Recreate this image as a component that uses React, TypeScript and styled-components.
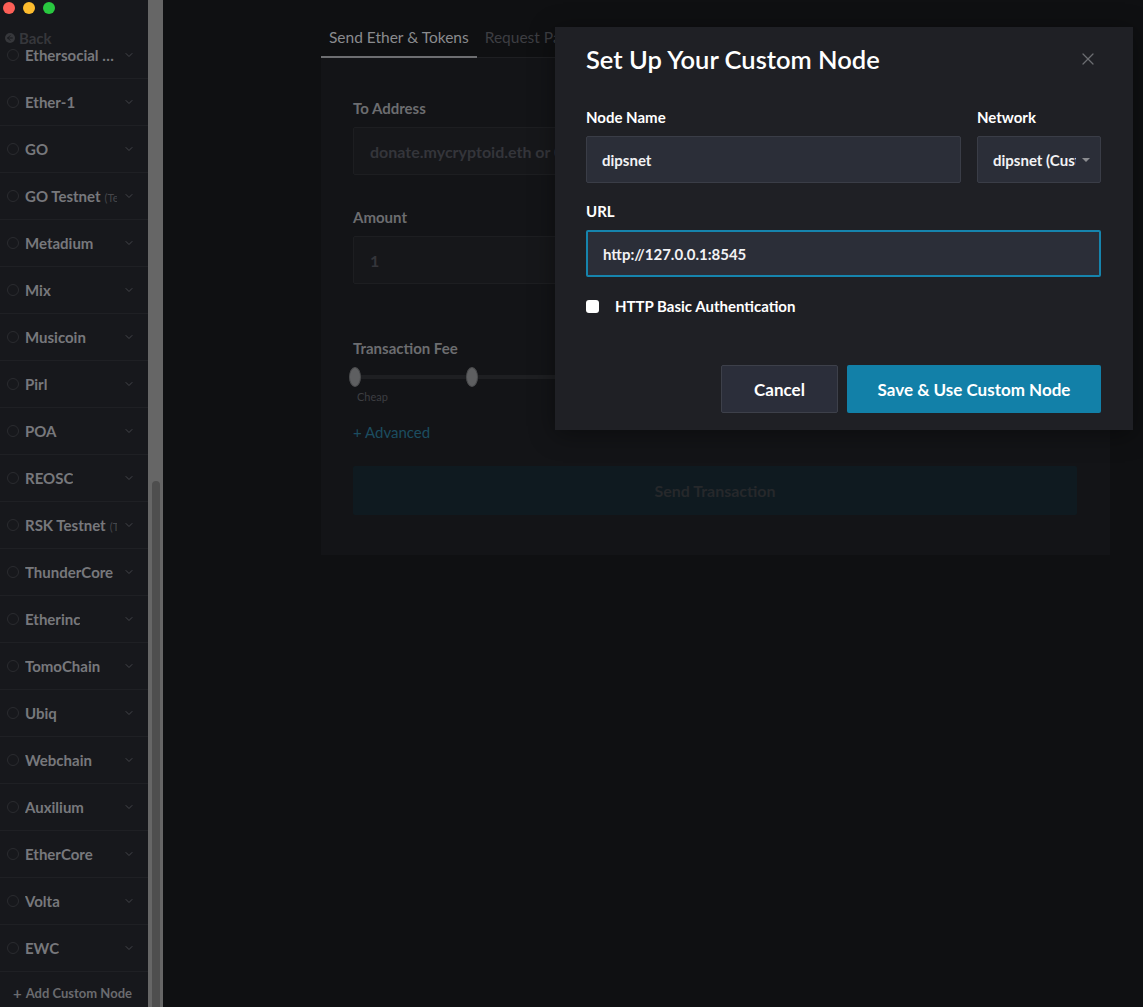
import React from 'react';
import styled, { createGlobalStyle } from 'styled-components';
import { ChevronDown, X, ArrowLeft } from 'lucide-react';

const GlobalStyle = createGlobalStyle`
  html, body {
    margin: 0;
    padding: 0;
    background: #0f1012;
  }
  body {
    font-family: Lato, "Open Sans", "Liberation Sans", sans-serif;
  }
  * {
    box-sizing: border-box;
  }
`;

interface Network {
  name: string;
  tag?: string;
}

const networks: Network[] = [
  { name: 'Ethersocial Network' },
  { name: 'Ether-1' },
  { name: 'GO' },
  { name: 'GO Testnet', tag: '(Testnet)' },
  { name: 'Metadium' },
  { name: 'Mix' },
  { name: 'Musicoin' },
  { name: 'Pirl' },
  { name: 'POA' },
  { name: 'REOSC' },
  { name: 'RSK Testnet', tag: '(Testnet)' },
  { name: 'ThunderCore' },
  { name: 'Etherinc' },
  { name: 'TomoChain' },
  { name: 'Ubiq' },
  { name: 'Webchain' },
  { name: 'Auxilium' },
  { name: 'EtherCore' },
  { name: 'Volta' },
  { name: 'EWC' },
];

const App = () => {
  return (
    <Page>
      <GlobalStyle />
      <Sidebar>
        <TrafficLights>
          <Light color="#fc5f57" />
          <Light color="#fdbc2e" />
          <Light color="#29c840" />
        </TrafficLights>
        <BackLink>
          <BackIcon>
            <ArrowLeft size={8} strokeWidth={3} />
          </BackIcon>
          Back
        </BackLink>
        <NetworkList>
          {networks.map((n) => (
            <NetworkRow key={n.name}>
              <Radio />
              <NetworkLabel>
                <NetworkName>{n.name}</NetworkName>
                {n.tag && <NetworkTag>{n.tag}</NetworkTag>}
              </NetworkLabel>
              <ChevronDown size={12} color="#44454a" strokeWidth={2} />
            </NetworkRow>
          ))}
        </NetworkList>
        <AddCustom>
          <Plus>+</Plus> Add Custom Node
        </AddCustom>
      </Sidebar>

      <ScrollTrack>
        <ScrollThumb $top={481} />
      </ScrollTrack>

      <Main>
        <Tabs>
          <Tab $active>Send Ether &amp; Tokens</Tab>
          <Tab>Request Payment</Tab>
        </Tabs>
        <Card>
          <FieldLabel>To Address</FieldLabel>
          <DimInput>donate.mycryptoid.eth or 0x4bbeEB066eD09B7AEd07bF39EEe0460DFa261520</DimInput>
          <FieldLabel $gap={32}>Amount</FieldLabel>
          <DimInput>1</DimInput>
          <FieldLabel $gap={54}>Transaction Fee</FieldLabel>
          <Slider>
            <Thumb />
            <Track />
            <Thumb />
            <Track $grow />
          </Slider>
          <SliderCaption>Cheap</SliderCaption>
          <Advanced>+ Advanced</Advanced>
          <SendButton>Send Transaction</SendButton>
        </Card>
      </Main>

      <Modal>
        <ModalHeader>
          <ModalTitle>Set Up Your Custom Node</ModalTitle>
          <CloseButton>
            <X size={20} strokeWidth={1.5} />
          </CloseButton>
        </ModalHeader>
        <ModalBody>
          <FieldRow>
            <Field>
              <ModalLabel>Node Name</ModalLabel>
              <ModalInput>dipsnet</ModalInput>
            </Field>
            <Field>
              <ModalLabel>Network</ModalLabel>
              <Select>
                <SelectText>dipsnet (Custom)</SelectText>
                <Caret />
              </Select>
            </Field>
          </FieldRow>
          <Field $gap={18}>
            <ModalLabel>URL</ModalLabel>
            <ModalInput $focused>http://127.0.0.1:8545</ModalInput>
          </Field>
          <CheckRow>
            <Checkbox />
            HTTP Basic Authentication
          </CheckRow>
        </ModalBody>
        <ModalFooter>
          <CancelButton>Cancel</CancelButton>
          <PrimaryButton>Save &amp; Use Custom Node</PrimaryButton>
        </ModalFooter>
      </Modal>
    </Page>
  );
};

const Page = styled.div`
  position: relative;
  display: flex;
  height: 100vh;
  min-height: 1007px;
  overflow: hidden;
  background: #0f1012;
`;

const Sidebar = styled.aside`
  position: relative;
  width: 148px;
  flex-shrink: 0;
  display: flex;
  flex-direction: column;
  background: #17181c;
  overflow: hidden;
`;

const TrafficLights = styled.div`
  position: absolute;
  top: 2px;
  left: 3px;
  display: flex;
  gap: 8px;
  z-index: 2;
`;

const Light = styled.span<{ color: string }>`
  width: 12px;
  height: 12px;
  border-radius: 50%;
  background: ${({ color }) => color};
`;

const BackLink = styled.div`
  position: absolute;
  top: 29px;
  left: 5px;
  display: flex;
  align-items: center;
  gap: 4px;
  font-size: 15px;
  font-weight: 700;
  color: #36373b;
  z-index: 2;
`;

const BackIcon = styled.span`
  width: 10px;
  height: 10px;
  border-radius: 50%;
  background: #36373b;
  color: #17181c;
  display: flex;
  align-items: center;
  justify-content: center;
`;

const NetworkList = styled.div`
  display: flex;
  flex-direction: column;
  padding-top: 32px;
`;

const NetworkRow = styled.div`
  display: flex;
  align-items: center;
  gap: 6px;
  height: 47px;
  padding: 0 13px 0 7px;
  border-bottom: 1px solid #1f2024;
`;

const Radio = styled.span`
  width: 12px;
  height: 12px;
  flex-shrink: 0;
  border-radius: 50%;
  border: 1px solid #2a2b2f;
`;

const NetworkLabel = styled.div`
  flex: 1;
  min-width: 0;
  display: flex;
  align-items: baseline;
  gap: 4px;
  overflow: hidden;
  white-space: nowrap;
`;

const NetworkName = styled.span`
  max-width: 95px;
  overflow: hidden;
  text-overflow: ellipsis;
  font-size: 15px;
  font-weight: 700;
  color: #77787c;
  flex-shrink: 0;
`;

const NetworkTag = styled.span`
  font-size: 11px;
  color: #45464a;
  flex-shrink: 0;
`;

const AddCustom = styled.div`
  display: flex;
  align-items: center;
  gap: 4px;
  padding: 12px 0 0 13px;
  font-size: 13px;
  font-weight: 700;
  color: #6a6b6f;
`;

const Plus = styled.span`
  font-size: 15px;
  font-weight: 700;
`;

const ScrollTrack = styled.div`
  width: 15px;
  flex-shrink: 0;
  display: flex;
  justify-content: center;
  background: #666666;
`;

const ScrollThumb = styled.div<{ $top: number }>`
  width: 8px;
  margin-top: ${({ $top }) => $top}px;
  border-radius: 4px 4px 0 0;
  background: #4e4e4e;
`;

const Main = styled.main`
  flex: 1;
  padding: 27px 0 0 158px;
  display: flex;
  flex-direction: column;
`;

const Tabs = styled.div`
  display: flex;
  width: 789px;
  border-bottom: 1px solid #1e1f22;
`;

const Tab = styled.div<{ $active?: boolean }>`
  padding: 0 8px 9px;
  margin-bottom: -1px;
  line-height: 20px;
  font-size: 15.5px;
  color: ${({ $active }) => ($active ? '#8a8b8e' : '#3d3e42')};
  border-bottom: 2px solid ${({ $active }) => ($active ? '#6d6e71' : 'transparent')};
`;

const Card = styled.section`
  width: 789px;
  display: flex;
  flex-direction: column;
  padding: 40px 33px 40px 32px;
  background: #131417;
`;

const FieldLabel = styled.div<{ $gap?: number }>`
  margin-top: ${({ $gap }) => $gap ?? 0}px;
  margin-bottom: 9px;
  line-height: 20px;
  font-size: 15px;
  font-weight: 700;
  color: #6c6d70;
`;

const DimInput = styled.div`
  height: 48px;
  display: flex;
  align-items: center;
  padding: 0 16px;
  border: 1px solid #1d1e21;
  border-radius: 2px;
  background: #16171a;
  font-size: 16px;
  font-weight: 700;
  color: #34353a;
  white-space: nowrap;
  overflow: hidden;
`;

const Slider = styled.div`
  display: flex;
  align-items: center;
  height: 20px;
  margin-left: -4px;
`;

const Thumb = styled.span`
  width: 12px;
  height: 20px;
  flex-shrink: 0;
  border-radius: 50%;
  background: #5e5f61;
  border: 1px solid #4a4b4d;
`;

const Track = styled.span<{ $grow?: boolean }>`
  height: 4px;
  width: ${({ $grow }) => ($grow ? 'auto' : '105px')};
  flex: ${({ $grow }) => ($grow ? 1 : 'none')};
  background: #1e1f22;
`;

const SliderCaption = styled.div`
  margin: 3px 0 0 4px;
  line-height: 14px;
  font-size: 11px;
  color: #3d3e42;
`;

const Advanced = styled.div`
  margin-top: 18px;
  line-height: 20px;
  font-size: 15px;
  color: #1c4d60;
`;

const SendButton = styled.div`
  margin-top: 24px;
  height: 49px;
  display: flex;
  align-items: center;
  justify-content: center;
  border-radius: 2px;
  background: #0f1a20;
  font-size: 16px;
  font-weight: 700;
  color: #26282b;
`;

const Modal = styled.div`
  position: absolute;
  top: 27px;
  left: 555px;
  width: 578px;
  background: #1f2025;
  box-shadow: 0 4px 24px rgba(0, 0, 0, 0.4);
`;

const ModalHeader = styled.div`
  height: 64px;
  display: flex;
  align-items: center;
  justify-content: space-between;
  padding: 0 35px 0 31px;
`;

const ModalTitle = styled.h2`
  margin: 0;
  font-size: 25.5px;
  font-weight: 600;
  color: #ffffff;
`;

const CloseButton = styled.span`
  display: flex;
  color: #6c6d71;
`;

const ModalBody = styled.div`
  display: flex;
  flex-direction: column;
  padding: 16px 32px 0 31px;
`;

const FieldRow = styled.div`
  display: grid;
  grid-template-columns: 1fr 124px;
  gap: 16px;
`;

const Field = styled.div<{ $gap?: number }>`
  display: flex;
  flex-direction: column;
  margin-top: ${({ $gap }) => $gap ?? 0}px;
`;

const ModalLabel = styled.div`
  margin-bottom: 9px;
  line-height: 20px;
  font-size: 15px;
  font-weight: 700;
  color: #ffffff;
`;

const ModalInput = styled.div<{ $focused?: boolean }>`
  height: 47px;
  display: flex;
  align-items: center;
  padding: 0 15px;
  border: ${({ $focused }) => ($focused ? '2px solid #1684ad' : '1px solid #3a3d47')};
  border-radius: 2px;
  background: #2b2e38;
  font-size: 15px;
  font-weight: 700;
  color: #f2f2f4;
`;

const Select = styled(ModalInput)`
  gap: 6px;
  padding-right: 10px;
`;

const SelectText = styled.span`
  flex: 1;
  overflow: hidden;
  white-space: nowrap;
`;

const Caret = styled.span`
  width: 0;
  height: 0;
  flex-shrink: 0;
  border-left: 4px solid transparent;
  border-right: 4px solid transparent;
  border-top: 4px solid #8b8c90;
`;

const CheckRow = styled.label`
  display: flex;
  align-items: center;
  gap: 16px;
  margin-top: 19px;
  line-height: 20px;
  font-size: 15px;
  font-weight: 700;
  color: #ffffff;
`;

const Checkbox = styled.span`
  width: 13px;
  height: 13px;
  border-radius: 3px;
  background: #ffffff;
`;

const ModalFooter = styled.div`
  display: flex;
  justify-content: flex-end;
  gap: 9px;
  padding: 49px 32px 17px;
`;

const BaseButton = styled.div`
  height: 48px;
  display: flex;
  align-items: center;
  justify-content: center;
  border-radius: 2px;
  font-size: 17px;
  font-weight: 700;
  color: #ffffff;
`;

const CancelButton = styled(BaseButton)`
  width: 117px;
  background: #2b2e3a;
  border: 1px solid #3d404a;
`;

const PrimaryButton = styled(BaseButton)`
  width: 254px;
  background: #1280a8;
`;

export default App;
